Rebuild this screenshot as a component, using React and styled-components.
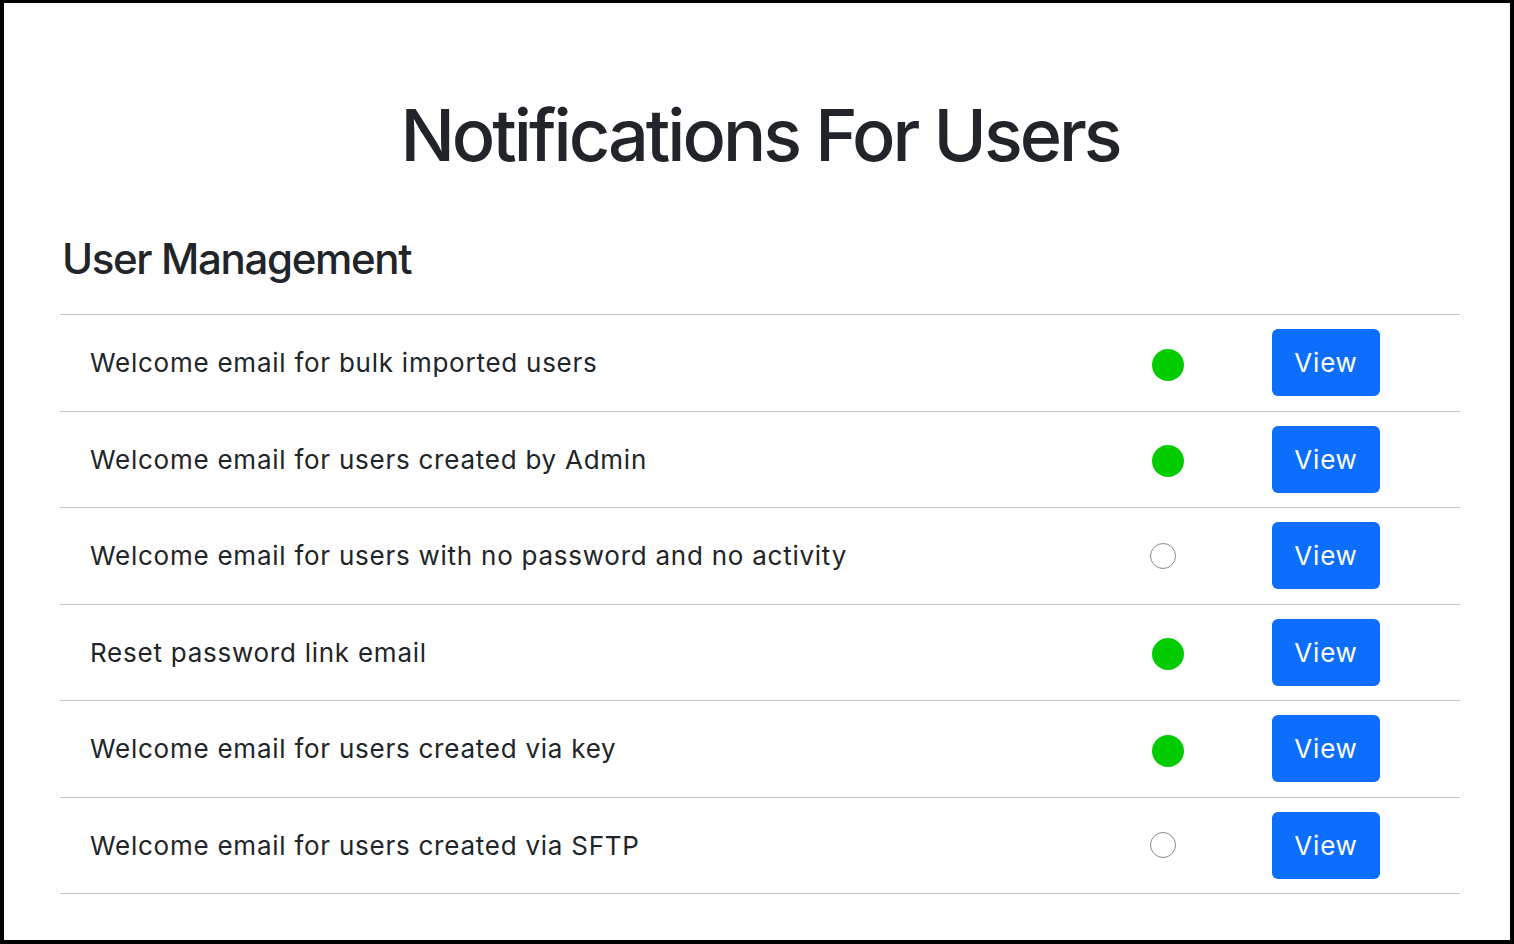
import React from "react";
import styled, { createGlobalStyle } from "styled-components";

const GlobalStyle = createGlobalStyle`
  html, body {
    margin: 0;
    padding: 0;
    background: #fff;
  }
  body {
    font-family: Inter, "Noto Sans", "Liberation Sans", sans-serif;
    color: #212529;
  }
`;

const Frame = styled.div`
  box-sizing: border-box;
  width: 1514px;
  height: 944px;
  border: 4px solid #000;
  border-top-width: 3px;
  padding: 0 50px 0 56px;
  overflow: hidden;
`;

const Title = styled.h1`
  margin: 0;
  padding-top: 90px;
  font-size: 72px;
  font-weight: 500;
  line-height: 84px;
  text-align: center;
  letter-spacing: -3px;
`;

const SectionTitle = styled.h2`
  margin: 56px 0 0 2px;
  font-size: 42px;
  font-weight: 500;
  line-height: 52px;
  letter-spacing: -1.35px;
`;

const Table = styled.div`
  margin-top: 29px;
  border-top: 1px solid #c4c4c4;
`;

const Row = styled.div`
  display: flex;
  align-items: center;
  height: 95.5px;
  border-bottom: 1px solid #c4c4c4;
`;

const Name = styled.div`
  flex: 1;
  padding-left: 30px;
  font-size: 26px;
  font-weight: 400;
  letter-spacing: 0.75px;
`;

const StatusCell = styled.div`
  width: 122px;
  display: flex;
  align-items: center;
`;

const Dot = styled.span`
  display: block;
  box-sizing: border-box;
  border-radius: 50%;
  ${(p) =>
    p.active
      ? `width: 32px; height: 32px; margin-left: 2px; margin-top: 4px; background: #00cc00;`
      : `width: 26px; height: 26px; margin-left: 0; border: 1.5px solid #8a8a8a; background: #fff;`}
`;

const ActionCell = styled.div`
  width: 188px;
`;

const ViewButton = styled.button`
  box-sizing: border-box;
  width: 108px;
  height: 67px;
  border: none;
  border-radius: 6px;
  background: #0d6efd;
  color: #fff;
  font-family: inherit;
  font-size: 26px;
  font-weight: 400;
  letter-spacing: 0.8px;
  cursor: pointer;
  &:hover {
    background: #0b5ed7;
  }
`;

const notifications = [
  { name: "Welcome email for bulk imported users", active: true },
  { name: "Welcome email for users created by Admin", active: true },
  { name: "Welcome email for users with no password and no activity", active: false },
  { name: "Reset password link email", active: true },
  { name: "Welcome email for users created via key", active: true },
  { name: "Welcome email for users created via SFTP", active: false },
];

export default function App() {
  return (
    <>
      <GlobalStyle />
      <Frame>
        <Title>Notifications For Users</Title>
        <SectionTitle>User Management</SectionTitle>
        <Table>
          {notifications.map((item, i) => (
            <Row key={i}>
              <Name>{item.name}</Name>
              <StatusCell>
                <Dot active={item.active} />
              </StatusCell>
              <ActionCell>
                <ViewButton>View</ViewButton>
              </ActionCell>
            </Row>
          ))}
        </Table>
      </Frame>
    </>
  );
}
